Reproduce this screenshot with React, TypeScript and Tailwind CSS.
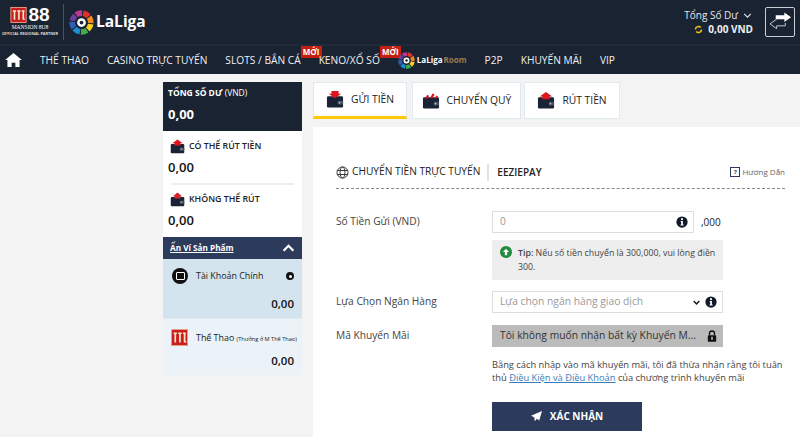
import React from "react";

function Wallet({ kind, className }: { kind: "down" | "up" | "swap" | "lock"; className?: string }) {
  return (
    <svg viewBox="0 0 20 19" className={`shrink-0 ${className ?? ""}`}>
      <rect x="1" y="6" width="18" height="12.5" rx="1.5" fill="#1a2335" />
      <rect x="13" y="11" width="6" height="4" rx="1" fill="#46505f" />
      <circle cx="15" cy="13" r="0.9" fill="#c9ced6" />
      {kind === "down" && <path d="M6 0h8v3h3l-7 5-7-5h3z" fill="#e0141c" />}
      {kind === "up" && <path d="M10 0l7 5h-3v3H6V5H3z" fill="#e0141c" />}
      {kind === "swap" && <path d="M3 7l3-4 2 1.500-2.500 3zM9 6.500l3-5 2 1.500-2.500 4zM14 7l2-3 2 1-1.500 2z" fill="#e0141c" />}
      {kind === "lock" && <path d="M10 0l6 5h-2v3H6V5H4z" fill="#d8222a" />}
    </svg>
  );
}

function LaLigaMark({ className }: { className?: string }) {
  const colors = ["#e4312b", "#f08a1d", "#f7cf1d", "#3fae49", "#1c8fd0", "#2c5fb3", "#6e3f98", "#b93a8c"];
  return (
    <svg viewBox="0 0 40 40" className={`shrink-0 ${className ?? ""}`}>
      {colors.map((c, i) => (
        <circle
          key={c}
          cx="20"
          cy="20"
          r="15"
          fill="none"
          stroke={c}
          strokeWidth="9"
          strokeDasharray="10 84.250"
          transform={`rotate(${i * 45 - 80} 20 20)`}
        />
      ))}
      <circle cx="20" cy="20" r="7" fill="#ffffff" />
      <circle cx="20" cy="20" r="3" fill="#1a2332" />
    </svg>
  );
}

function M88Mark({ className }: { className?: string }) {
  return (
    <svg viewBox="0 0 20 20" className={`shrink-0 ${className ?? ""}`}>
      <rect width="20" height="20" fill="#c8201f" />
      <rect x="0.500" y="0.500" width="19" height="19" fill="none" stroke="#f0d9a8" strokeWidth="0.800" />
      <path d="M3 4h4v2H6v10H4V6H3zM8.500 4h4v2h-1v10h-2V6h-1zM14 4h3.500v2H17v8.500h1V16h-3V6h-1z" fill="#f7e8cc" />
    </svg>
  );
}

function Info({ className }: { className?: string }) {
  return (
    <svg viewBox="0 0 16 16" className={`shrink-0 ${className ?? ""}`}>
      <circle cx="8" cy="8" r="7.500" fill="#111827" />
      <circle cx="8" cy="4.200" r="1.400" fill="#fff" />
      <path d="M6.300 6.800h2.900v4.400h1v1.400H6v-1.400h1V8.200h-.7z" fill="#fff" />
    </svg>
  );
}

function Nav({ children, className = "" }: { children: React.ReactNode; className?: string }) {
  return <span className={`whitespace-nowrap text-[10.200px] font-medium leading-[14px] text-[#eef0f3] ${className}`}>{children}</span>;
}

function Badge() {
  return (
    <span className="absolute right-[-21px] top-[-7px] w-[21px] bg-[#c5200f] text-center text-[8px] font-bold leading-[12px] text-white">
      MỚI
    </span>
  );
}

function Tab({ kind, label, active, className }: { kind: "down" | "up" | "swap"; label: string; active?: boolean; className: string }) {
  return (
    <div
      className={`flex h-[37px] items-center justify-center gap-[7px] border border-[#dfeaf0] bg-white text-[10.300px] font-medium text-[#222] ${className} ${
        active ? "border-b-[3px] border-b-[#fdc70c]" : ""
      }`}
    >
      <Wallet kind={kind} className="h-[17px] w-[18px]" />
      <span>{label}</span>
    </div>
  );
}

function Balance({ kind, label }: { kind: "up" | "lock"; label: string }) {
  return (
    <div>
      <div className="flex h-[15px] items-center gap-[4px] pl-[7px]">
        <Wallet kind={kind} className="h-[15px] w-[15px]" />
        <span className="text-[8.800px] font-semibold text-[#222]">{label}</span>
      </div>
      <div className="mt-[4px] pl-[5px] text-[13px] font-semibold leading-[18px] text-[#111]">0,00</div>
    </div>
  );
}

export default function App() {
  return (
    <div className="h-[437px] w-[800px] overflow-hidden bg-[#f3f3f3] font-['Open_Sans',sans-serif]">
      <header className="flex h-[44px] items-center justify-between bg-[#1a2332] pl-[1px] pr-[5px]">
        <div className="flex items-center">
          <div className="flex w-[58px] flex-col items-center">
            <div className="flex items-center gap-[1px]">
              <M88Mark className="h-[16px] w-[17px]" />
              <span className="font-['Liberation_Sans',sans-serif] text-[19px] font-bold leading-[16px] text-white">88</span>
            </div>
            <span className="mt-[1px] font-['Liberation_Serif',serif] text-[5.500px] leading-[7px] text-white">MANSION 8U8</span>
            <span className="whitespace-nowrap text-[3.800px] font-bold leading-[6px] text-[#dddddd]">OFFICIAL REGIONAL PARTNER</span>
          </div>
          <div className="ml-[4px] h-[36px] w-px bg-[#4a5361]" />
          <LaLigaMark className="ml-[5px] h-[25px] w-[25px]" />
          <span className="ml-[2px] text-[15.500px] font-bold text-white">LaLiga</span>
        </div>
        <div className="flex items-center gap-[12px]">
          <div className="flex flex-col items-end">
            <div className="flex items-center gap-[5px] pr-px text-[10px] leading-[14px] text-[#e5e7ea]">
              Tổng Số Dư
              <svg viewBox="0 0 10 6" className="h-[5px] w-[9px]">
                <path d="M1 1l4 4 4-4" fill="none" stroke="#e5e7ea" strokeWidth="1.300" />
              </svg>
            </div>
            <div className="flex items-center gap-[5px] text-[10px] font-bold leading-[14px] text-[#eef0f3]">
              <svg viewBox="0 0 12 12" className="h-[9px] w-[9px]">
                <path d="M2 6a4 4 0 0 1 7-2.700M10 6a4 4 0 0 1-7 2.700" fill="none" stroke="#f2c40f" strokeWidth="2" />
              </svg>
              0,00 VND
            </div>
          </div>
          <div className="flex h-[30px] w-[30px] items-center justify-center rounded-[2px] border border-[#c9ced4]">
            <svg viewBox="0 0 24 20" className="h-[20px] w-[23px]">
              <path d="M7 3h9V0l7 5-7 5V7H7z" fill="#fff" />
              <path d="M17 11v3H8v3L1 12l7-5" fill="none" stroke="#c9ced4" strokeWidth="1" />
            </svg>
          </div>
        </div>
      </header>
      <nav className="flex h-[30px] items-center border-t-2 border-[#202c3e] bg-[#1a2332] pl-[5px]">
        <svg viewBox="0 0 18 15" className="h-[14px] w-[17px]">
          <path d="M9 0l9 7.500h-2.500V15H11v-4.500H7V15H2.500V7.500H0z" fill="#fff" />
        </svg>
        <Nav className="ml-[18px]">THỂ THAO</Nav>
        <Nav className="ml-[18px]">CASINO TRỰC TUYẾN</Nav>
        <Nav className="relative ml-[18px]">SLOTS / BẮN CÁ<Badge /></Nav>
        <Nav className="relative ml-[18px]">KENO/XỔ SỐ<Badge /></Nav>
        <span className="relative ml-[18px] flex items-center">
          <LaLigaMark className="h-[17px] w-[17px]" />
          <span className="ml-[2px] text-[8px] font-bold text-white">LaLiga</span>
          <span className="ml-px text-[8px] font-bold text-[#9a7a4e]">Room</span>
        </span>
        <Nav className="ml-[18px]">P2P</Nav>
        <Nav className="ml-[18px]">KHUYẾN MÃI</Nav>
        <Nav className="ml-[18px]">VIP</Nav>
      </nav>
      <main className="flex items-start pl-[163px] pt-[8px]">
        <aside className="w-[139px]">
          <div className="h-[49px] bg-[#1a2332] px-[5px] pt-[4px] text-white">
            <div className="whitespace-nowrap text-[8.500px] leading-[14px]">
              <span className="font-bold">TỔNG SỐ DƯ</span> (VND)
            </div>
            <div className="mt-[5px] text-[13px] font-bold leading-[18px]">0,00</div>
          </div>
          <div className="h-[106px] bg-white pt-[8px]">
            <Balance kind="up" label="CÓ THỂ RÚT TIỀN" />
            <div className="mx-[8px] mb-[7px] mt-[7px] h-[2px] bg-[#eeeeee]" />
            <Balance kind="lock" label="KHÔNG THỂ RÚT" />
          </div>
          <div className="flex h-[22px] items-center justify-between bg-[#2c3a5c] px-[7px]">
            <span className="text-[8.200px] font-bold text-white underline">Ẩn Ví Sản Phẩm</span>
            <svg viewBox="0 0 14 9" className="h-[8px] w-[13px]">
              <path d="M1.500 7.500L7 2l5.500 5.500" fill="none" stroke="#fff" strokeWidth="2.500" />
            </svg>
          </div>
          <div className="h-[59px] bg-[#d4e4ee] pl-[9px] pr-[8px] pt-[9px]">
            <div className="flex h-[16px] items-center">
              <span className="flex h-[16px] w-[16px] items-center justify-center rounded-full bg-[#111]">
                <span className="h-[8px] w-[9px] rounded-[1px] border border-white" />
              </span>
              <span className="ml-[8px] text-[8.900px] text-[#222]">Tài Khoản Chính</span>
              <span className="ml-auto flex h-[8px] w-[8px] items-center justify-center rounded-full bg-[#111]">
                <span className="h-[3px] w-[3px] rounded-full bg-white" />
              </span>
            </div>
            <div className="mt-[12px] text-right text-[11.500px] font-semibold leading-[16px] text-[#111]">0,00</div>
          </div>
          <div className="h-[57px] border-t border-[#dfeaf0] bg-[#ebf3f8] pl-[8px] pr-[8px] pt-[10px]">
            <div className="flex h-[17px] items-center">
              <M88Mark className="h-[17px] w-[17px]" />
              <span className="ml-[8px] whitespace-nowrap text-[8.900px] text-[#222]">
                Thể Thao <span className="text-[5.600px]">(Thưởng ở M Thể Thao)</span>
              </span>
            </div>
            <div className="mt-[7px] text-right text-[11.500px] font-semibold leading-[16px] text-[#111]">0,00</div>
          </div>
        </aside>
        <section className="ml-[11px] w-[487px]">
          <div className="flex h-[37px]">
            <Tab kind="down" label="GỬI TIỀN" active className="w-[94px]" />
            <Tab kind="swap" label="CHUYỂN QUỸ" className="ml-[5px] w-[109px]" />
            <Tab kind="up" label="RÚT TIỀN" className="ml-[3px] w-[96px]" />
          </div>
          <div className="mt-[8px] h-[310px] bg-white pl-[23px] pr-[15px] pt-[32px]">
            <div className="flex h-[30px] items-center border-b border-dashed border-[#888888] pb-[3px]">
              <svg viewBox="0 0 16 16" className="h-[13px] w-[13px] shrink-0">
                <g fill="none" stroke="#333" strokeWidth="1.200">
                  <circle cx="8" cy="8" r="6.800" />
                  <ellipse cx="8" cy="8" rx="3" ry="6.800" />
                  <path d="M1.500 5.500h13M1.500 10.500h13" />
                </g>
              </svg>
              <span className="ml-[3px] text-[10.200px] font-medium text-[#222]">CHUYỂN TIỀN TRỰC TUYẾN</span>
              <span className="ml-[7px] h-[17px] w-[2px] bg-[#e2e2e2]" />
              <span className="ml-[8px] text-[10px] font-semibold text-[#222]">EEZIEPAY</span>
              <span className="ml-auto flex items-center text-[8px] text-[#666]">
                <span className="mr-[2px] flex h-[10px] w-[10px] items-center justify-center border border-[#2c3a5c] text-[6px] font-bold leading-none text-[#2c3a5c]">?</span>
                Hướng Dẫn
              </span>
            </div>
            <div className="mt-[22px] flex">
              <label className="w-[156px] pt-[3px] text-[10.200px] text-[#444]">Số Tiền Gửi (VND)</label>
              <div className="w-[231px]">
                <div className="flex items-center">
                  <div className="flex h-[22px] w-[202px] items-center justify-between border border-[#dddddd] pl-[7px] pr-[5px] text-[10.200px] text-[#999]">
                    0
                    <Info className="h-[12px] w-[12px]" />
                  </div>
                  <span className="ml-[7px] text-[10px] font-medium text-[#222]">,000</span>
                </div>
                <div className="relative mt-[7px] h-[40px] whitespace-nowrap rounded-[2px] bg-[#eeeeee] py-[6px] pl-[26px] text-[8.800px] leading-[14px] text-[#444]">
                  <span className="absolute left-[8px] top-[6px] flex h-[12px] w-[12px] items-center justify-center rounded-full bg-[#1f8a3b]">
                    <svg viewBox="0 0 10 10" className="h-[8px] w-[8px]">
                      <path d="M5 1l4 4H6.500v4h-3V5H1z" fill="#fff" />
                    </svg>
                  </span>
                  <b className="font-semibold">Tip:</b> Nếu số tiền chuyển là 300,000, vui lòng điền
                  <br />
                  300.
                </div>
              </div>
            </div>
            <div className="mt-[11px] flex items-center">
              <label className="w-[156px] text-[10.200px] text-[#444]">Lựa Chọn Ngân Hàng</label>
              <div className="flex h-[22px] w-[231px] items-center border border-[#dddddd] pl-[7px] pr-[5px] text-[10.300px] text-[#999]">
                Lựa chọn ngân hàng giao dịch
                <svg viewBox="0 0 10 6" className="ml-auto h-[5px] w-[7px]">
                  <path d="M1 1l4 4 4-4" fill="none" stroke="#111" strokeWidth="2" />
                </svg>
                <Info className="ml-[5px] h-[12px] w-[12px]" />
              </div>
            </div>
            <div className="mt-[12px] flex items-center">
              <label className="w-[156px] text-[10.200px] text-[#444]">Mã Khuyến Mãi</label>
              <div className="flex h-[22px] w-[231px] items-center bg-[#bbbbbb] pl-[8px] pr-[6px] text-[10.300px] text-[#333]">
                <span className="whitespace-nowrap">Tôi không muốn nhận bất kỳ Khuyến M...</span>
                <svg viewBox="0 0 12 14" className="ml-auto h-[12px] w-[10px] shrink-0">
                  <path d="M3 6V4a3 3 0 0 1 6 0v2" fill="none" stroke="#111" strokeWidth="1.600" />
                  <rect x="1" y="6" width="10" height="8" rx="1" fill="#111" />
                  <rect x="5" y="8" width="2" height="3.500" fill="#bbb" />
                </svg>
              </div>
            </div>
            <p className="ml-[156px] mt-[11px] whitespace-nowrap text-[9.300px] leading-[13px] text-[#444]">
              Bằng cách nhập vào mã khuyến mãi, tôi đã thừa nhận rằng tôi tuân
              <br />
              thủ <span className="text-[#3a7dbd] underline">Điều Kiện và Điều Khoản</span> của chương trình khuyến mãi
            </p>
            <button className="ml-[156px] mt-[18px] flex h-[29px] w-[150px] items-center justify-center gap-[8px] bg-[#2c3a5c] text-[10px] font-bold text-white">
              <svg viewBox="0 0 14 14" className="h-[11px] w-[11px]">
                <path d="M14 0L0 6l4 2 1 5 2.500-3 3 2z" fill="#fff" />
              </svg>
              XÁC NHẬN
            </button>
          </div>
        </section>
      </main>
    </div>
  );
}
